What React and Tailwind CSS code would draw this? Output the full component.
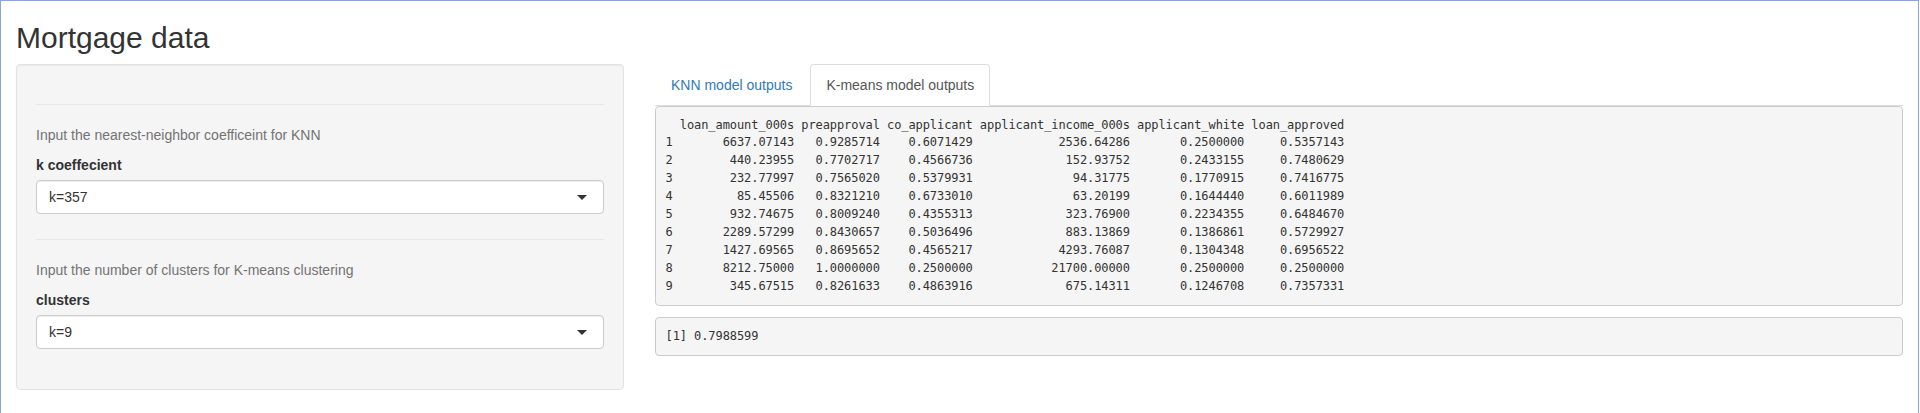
const rows = [
  ["1", "6637.07143", "0.9285714", "0.6071429", "2536.64286", "0.2500000", "0.5357143"],
  ["2", "440.23955", "0.7702717", "0.4566736", "152.93752", "0.2433155", "0.7480629"],
  ["3", "232.77997", "0.7565020", "0.5379931", "94.31775", "0.1770915", "0.7416775"],
  ["4", "85.45506", "0.8321210", "0.6733010", "63.20199", "0.1644440", "0.6011989"],
  ["5", "932.74675", "0.8009240", "0.4355313", "323.76900", "0.2234355", "0.6484670"],
  ["6", "2289.57299", "0.8430657", "0.5036496", "883.13869", "0.1386861", "0.5729927"],
  ["7", "1427.69565", "0.8695652", "0.4565217", "4293.76087", "0.1304348", "0.6956522"],
  ["8", "8212.75000", "1.0000000", "0.2500000", "21700.00000", "0.2500000", "0.2500000"],
  ["9", "345.67515", "0.8261633", "0.4863916", "675.14311", "0.1246708", "0.7357331"],
];

const headers = [
  "loan_amount_000s",
  "preapproval",
  "co_applicant",
  "applicant_income_000s",
  "applicant_white",
  "loan_approved",
];

// mimic R's data.frame print: row names left, columns right aligned
const tableText = [
  "  " + headers.join(" "),
  ...rows.map(
    ([name, ...vals]) =>
      name + " " + vals.map((v, i) => v.padStart(headers[i].length, " ")).join(" ")
  ),
].join("\n");

const Caret = () => (
  <svg width="10" height="5" viewBox="0 0 10 5" className="shrink-0">
    <polygon points="0,0 10,0 5,5" fill="#333" />
  </svg>
);

const SelectBox = ({ value }) => (
  <div className="flex h-[34px] w-full items-center justify-between rounded-[4px] border border-[#ccc] bg-white pl-[12px] pr-[16px] text-[14px] text-[#333] shadow-[inset_0_1px_1px_rgba(0,0,0,0.075)]">
    <span>{value}</span>
    <Caret />
  </div>
);

const InputBlock = ({ help, label, value, last }) => (
  <div className={last ? "" : "mb-[25px]"}>
    <hr className="mt-[20px] mb-[20px] border-0 border-t border-[#e8e8e8]" />
    <p className="mb-[10px] text-[14px] leading-[20px] text-[#737373]">{help}</p>
    <label className="mb-[5px] block text-[14px] font-bold leading-[20px] text-[#333]">{label}</label>
    <SelectBox value={value} />
  </div>
);

export default function App() {
  return (
    <div className="min-h-[413px] w-[1919px] border-t border-l border-r border-[#8aa5d6] bg-white font-['Liberation_Sans',Arial,sans-serif] text-[14px] text-[#333]">
      <div className="px-[15px]">
        <h2 className="mt-[20px] mb-[10px] text-[30px] font-medium leading-[33px] text-[#333]">
          Mortgage data
        </h2>

        <div className="flex gap-[31px]">
          {/* sidebar */}
          <div className="mb-[20px] w-[608px] shrink-0 rounded-[4px] border border-[#e3e3e3] bg-[#f5f5f5] p-[19px] pb-[40px] shadow-[inset_0_1px_1px_rgba(0,0,0,0.05)]">
            <InputBlock
              help="Input the nearest-neighbor coefficeint for KNN"
              label="k coeffecient"
              value="k=357"
            />
            <InputBlock
              help="Input the number of clusters for K-means clustering"
              label="clusters"
              value="k=9"
              last
            />
          </div>

          {/* main panel */}
          <div className="min-w-0 flex-1">
            <ul className="flex border-b border-[#ddd]">
              <li className="-mb-px mr-[2px]">
                <a className="block rounded-t-[4px] border border-transparent px-[15px] py-[10px] leading-[20px] text-[#337ab7]">
                  KNN model outputs
                </a>
              </li>
              <li className="-mb-px">
                <a className="block rounded-t-[4px] border border-[#ddd] border-b-white bg-white px-[15px] py-[10px] leading-[20px] text-[#555]">
                  K-means model outputs
                </a>
              </li>
            </ul>

            <pre className="mb-[11px] overflow-hidden whitespace-pre rounded-[4px] border border-[#ccc] bg-[#f5f5f5] p-[9.5px] font-['DejaVu_Sans_Mono',monospace] text-[12px] leading-[17.9px] tracking-[-0.08px] text-[#333]">
              {tableText}
            </pre>
            <pre className="mb-[10px] whitespace-pre rounded-[4px] border border-[#ccc] bg-[#f5f5f5] p-[9.5px] font-['DejaVu_Sans_Mono',monospace] text-[12px] leading-[17.9px] tracking-[-0.08px] text-[#333]">
              [1] 0.7988599
            </pre>
          </div>
        </div>
      </div>
    </div>
  );
}
